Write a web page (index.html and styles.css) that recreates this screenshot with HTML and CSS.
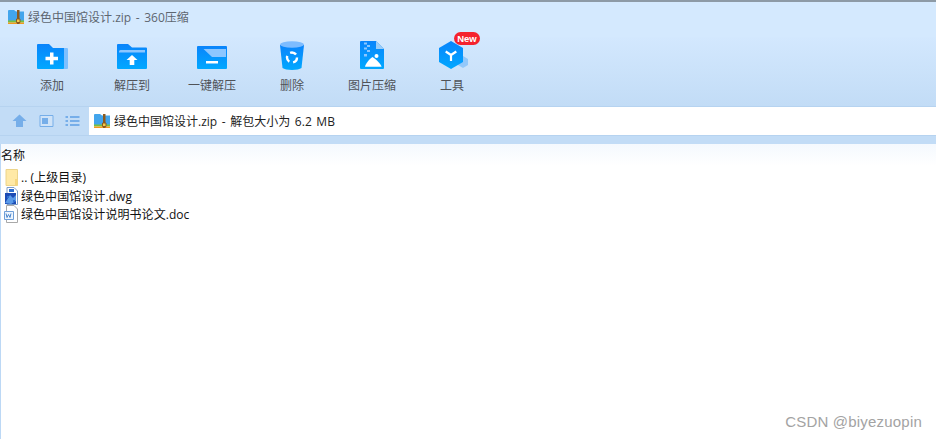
FILE: index.html
```html
<!DOCTYPE html>
<html lang="zh-CN">
<head>
  <meta charset="UTF-8" />
  <title>绿色中国馆设计.zip - 360压缩</title>
  <link rel="stylesheet" href="styles.css">
</head>
<body>
  <div class="app">
    <header class="top">
      <div class="titlebar">
        <svg class="zip-icon" viewBox="0 0 16 14"><path d="M0 1a1 1 0 0 1 1-1h5l2 1.500h8V11H0z" fill="#42a5ec"/><path d="M0 10.500h16v2H0z" fill="#78c03e"/><path d="M0 12.500h16V14H0z" fill="#f09a1e"/><path d="M9 0h2.500v14H9z" fill="#8c5a1e"/><path d="M8.500 9h3.500v3.500H8.500z" fill="#f5c94c" stroke="#8c5a1e"/></svg>
        <span>绿色中国馆设计.zip - 360压缩</span>
      </div>

      <div class="toolbar">
        <div class="tool">
          <svg class="tool-icon" viewBox="0 0 32 30"><path d="M27 7h4a1 1 0 0 1 1 1v19a1 1 0 0 1-1 1h-4z" fill="#7dc0ff"/><path d="M2 3h11l4 4h11v20a1 1 0 0 1-1 1H2a1 1 0 0 1-1-1V4a1 1 0 0 1 1-1z" fill="url(#blue)"/><path d="M14 11.500h3.500v4.200h4.500v3.600h-4.500v4.200H14v-4.200H9.500v-3.600H14z" fill="#fff"/></svg>
          <span>添加</span>
        </div>
        <div class="tool">
          <svg class="tool-icon" viewBox="0 0 32 30"><path d="M2 3h10l4 3.500h14a1 1 0 0 1 1 1V27a1 1 0 0 1-1 1H2a1 1 0 0 1-1-1V4a1 1 0 0 1 1-1z" fill="url(#blue)"/><path d="M3 11.500V10.500a1.500 1.500 0 0 1 1.500-1.500H29v2.500z" fill="#8cc6ff"/><path d="M16 14l5.500 5h-3.200v5h-4.600v-5h-3.200z" fill="#fff"/></svg>
          <span>解压到</span>
        </div>
        <div class="tool">
          <svg class="tool-icon" viewBox="0 0 32 30"><path d="M2 5h28a1 1 0 0 1 1 1v21a1 1 0 0 1-1 1H2a1 1 0 0 1-1-1V6a1 1 0 0 1 1-1z" fill="url(#blue)"/><path d="M7.500 8H30v8H16z" fill="#8cc6ff"/><path d="M10 20h12v2.500H10z" fill="#fff"/></svg>
          <span>一键解压</span>
        </div>
        <div class="tool">
          <svg class="tool-icon" viewBox="0 0 32 30"><path d="M4 4h24l-2.500 23c-3 2.500-16 2.500-19 0z" fill="url(#blue)"/><ellipse cx="16" cy="3.500" rx="12" ry="3.200" fill="#7dbcff"/><circle cx="16" cy="16.500" r="5" fill="none" stroke="#fff" stroke-width="2.400" stroke-dasharray="6.500 4"/></svg>
          <span>删除</span>
        </div>
        <div class="tool">
          <svg class="tool-icon" viewBox="0 0 32 30"><path d="M5 0h15l8 8v19a1 1 0 0 1-1 1H5a1 1 0 0 1-1-1V1a1 1 0 0 1 1-1z" fill="url(#blue)"/><path d="M20 0l8 8h-8z" fill="#9ccdf8"/><path d="M8 1.500h3v2H8zM11 4h3v2h-3zM8 6.500h3v2H8zM11 9h3v2h-3zM8 13h3v2.500H8z" fill="#8cc6ff"/><circle cx="20.500" cy="15" r="2" fill="#fff"/><path d="M9 25.700c0-2 5-8.500 7.500-9.700 2.500 1.200 9 7.700 9 9.700z" fill="#fff"/></svg>
          <span>图片压缩</span>
        </div>
        <div class="tool">
          <svg class="tool-icon" viewBox="0 0 32 30"><path d="M27 15l5 3v6l-5 3-5-3v-6z" fill="#93c8fa"/><path d="M15 0l12 7v14l-12 7-12-7V7z" fill="url(#blue)"/><path d="M15 14v6M15 14l-5.300-3.500M15 14l5.300-3.500" stroke="#fff" stroke-width="2.200" fill="none"/></svg>
          <span>工具</span>
          <b class="badge">New</b>
        </div>
      </div>

      <div class="navbar">
        <div class="nav-btns">
          <svg class="nav-icon" viewBox="0 0 14 14"><path d="M7 .5l7 6.500h-3.500v6h-7V7H0z" fill="#76aee9"/></svg>
          <svg class="nav-icon" viewBox="0 0 14 14"><path d="M.5 1.500h13v11H.5z" fill="#cfe3f8" stroke="#76aee9"/><path d="M2.500 4h6v6h-6z" fill="#76aee9"/></svg>
          <svg class="nav-icon" viewBox="0 0 14 14"><path d="M0 2h2.500v2H0zM4.500 2H14v2H4.500zM0 6h2.500v2H0zM4.500 6H14v2H4.500zM0 10h2.500v2H0zM4.500 10H14v2H4.500z" fill="#76aee9"/></svg>
        </div>
        <div class="address">
          <svg class="zip-icon" viewBox="0 0 16 14"><path d="M0 1a1 1 0 0 1 1-1h5l2 1.500h8V11H0z" fill="#42a5ec"/><path d="M0 10.500h16v2H0z" fill="#78c03e"/><path d="M0 12.500h16V14H0z" fill="#f09a1e"/><path d="M9 0h2.500v14H9z" fill="#8c5a1e"/><path d="M8.500 9h3.500v3.500H8.500z" fill="#f5c94c" stroke="#8c5a1e"/></svg>
          <span>绿色中国馆设计.zip - 解包大小为 6.2 MB</span>
        </div>
      </div>
      <div class="band"></div>
    </header>

    <main class="list">
      <div class="list-head">名称</div>
      <div class="row">
        <svg class="file-icon" viewBox="0 0 14 18"><path d="M2 1.500h11.500v16H2z" fill="#ffe9a6" stroke="#ecd48a"/><path d="M11 11h2.500v6.500H11z" fill="#f6d67e"/></svg>
        <span>.. (上级目录)</span>
      </div>
      <div class="row">
        <svg class="file-icon" viewBox="0 0 14 18"><path d="M3 .5h7l3.500 3.500v13.500H3z" fill="#fff" stroke="#7c9cc8"/><path d="M1 6h11v11H1z" fill="#1c4bb4"/><path d="M1 16l5-8 3 3 3-3v6l-5 3z" fill="#5a9ae8"/><path d="M5 2h5v3H5zM3 9h2v2H3zM9 13h2v2H9z" fill="#2f6fd0"/></svg>
        <span>绿色中国馆设计.dwg</span>
      </div>
      <div class="row">
        <svg class="file-icon" viewBox="0 0 14 18"><path d="M2.500 .5h7.500l3.500 3.500v13.500h-11z" fill="#fff" stroke="#a9a9a9"/><path d="M.5 6.500h9v8h-9z" fill="#eef5fd" stroke="#6f9fd8"/><path d="M2 8.500l1 4 1.500-3 1.500 3 1-4" fill="none" stroke="#4a86cc"/></svg>
        <span>绿色中国馆设计说明书论文.doc</span>
      </div>
    </main>

    <div class="watermark">CSDN @biyezuopin</div>
  </div>

  <svg class="defs" width="0" height="0">
    <defs>
      <linearGradient id="blue" x1="0" y1="0" x2="0" y2="1">
        <stop offset="0" stop-color="#0a84fb"/>
        <stop offset="1" stop-color="#01a8ff"/>
      </linearGradient>
    </defs>
  </svg>
</body>
</html>
```

FILE: styles.css
```css
* {
  box-sizing: border-box;
}
html, body {
  height: 100%;
}
body {
  margin: 0;
  font-family: "Open Sans", "Noto Sans CJK SC", sans-serif;
  font-size: 12px;
  background: #fff;
  color: #111;
  overflow: hidden;
}
.app {
  position: relative;
  height: 439px;
  display: flex;
  flex-direction: column;
}
.top {
  flex: none;
}
.titlebar {
  height: 37px;
  padding: 0 0 6px 8px;
  display: flex;
  align-items: center;
  gap: 4px;
  color: #5e6670;
  word-spacing: 1.500px;
  background: #d4e9fe;
  border-top: 2px solid #8d9aa6;
}
.zip-icon {
  width: 16px;
  height: 14px;
  flex: none;
}
.toolbar {
  height: 70px;
  padding: 4px 0 0 12px;
  display: flex;
  background: linear-gradient(#d3e8fe, #c2dcf6);
  border-bottom: 1px solid #b6d3f0;
}
.tool {
  position: relative;
  width: 80px;
  display: flex;
  flex-direction: column;
  align-items: center;
  gap: 6px;
  color: #505358;
}
.tool-icon {
  width: 32px;
  height: 30px;
}
.tool span {
  line-height: 18px;
}
.badge {
  position: absolute;
  top: -9px;
  left: 42px;
  width: 26px;
  height: 13px;
  border-radius: 7px;
  background: #f5222d;
  color: #fff;
  font: bold 9.500px/13px "Liberation Sans", sans-serif;
  text-align: center;
}
.navbar {
  height: 28px;
  display: flex;
  background: #c2dcf6;
}
.nav-btns {
  width: 89px;
  padding: 0 9px 0 12px;
  display: flex;
  align-items: center;
  justify-content: space-between;
}
.nav-icon {
  width: 15px;
  height: 14px;
}
.address {
  flex: 1;
  padding-left: 5px;
  display: flex;
  align-items: center;
  gap: 4px;
  background: #fff;
  color: #222;
  word-spacing: 1.500px;
}
.band {
  height: 9px;
  background: #c2dcf6;
  border-top: 1px solid #b6d3f0;
}
.list {
  flex: 1;
  background: linear-gradient(#f4f9fe, #fff 22px);
  border-left: 1px solid #bcd8f5;
}
.list-head {
  height: 24px;
  line-height: 24px;
}
.row {
  height: 18.500px;
  padding-left: 3px;
  display: flex;
  align-items: center;
  gap: 3px;
  letter-spacing: .06px;
}
.file-icon {
  width: 14px;
  height: 18px;
  flex: none;
}
.watermark {
  position: absolute;
  right: 14px;
  bottom: 9px;
  font: 15px "Liberation Sans", sans-serif;
  letter-spacing: .2px;
  color: #a3a3a3;
}
.defs {
  position: absolute;
}
```
